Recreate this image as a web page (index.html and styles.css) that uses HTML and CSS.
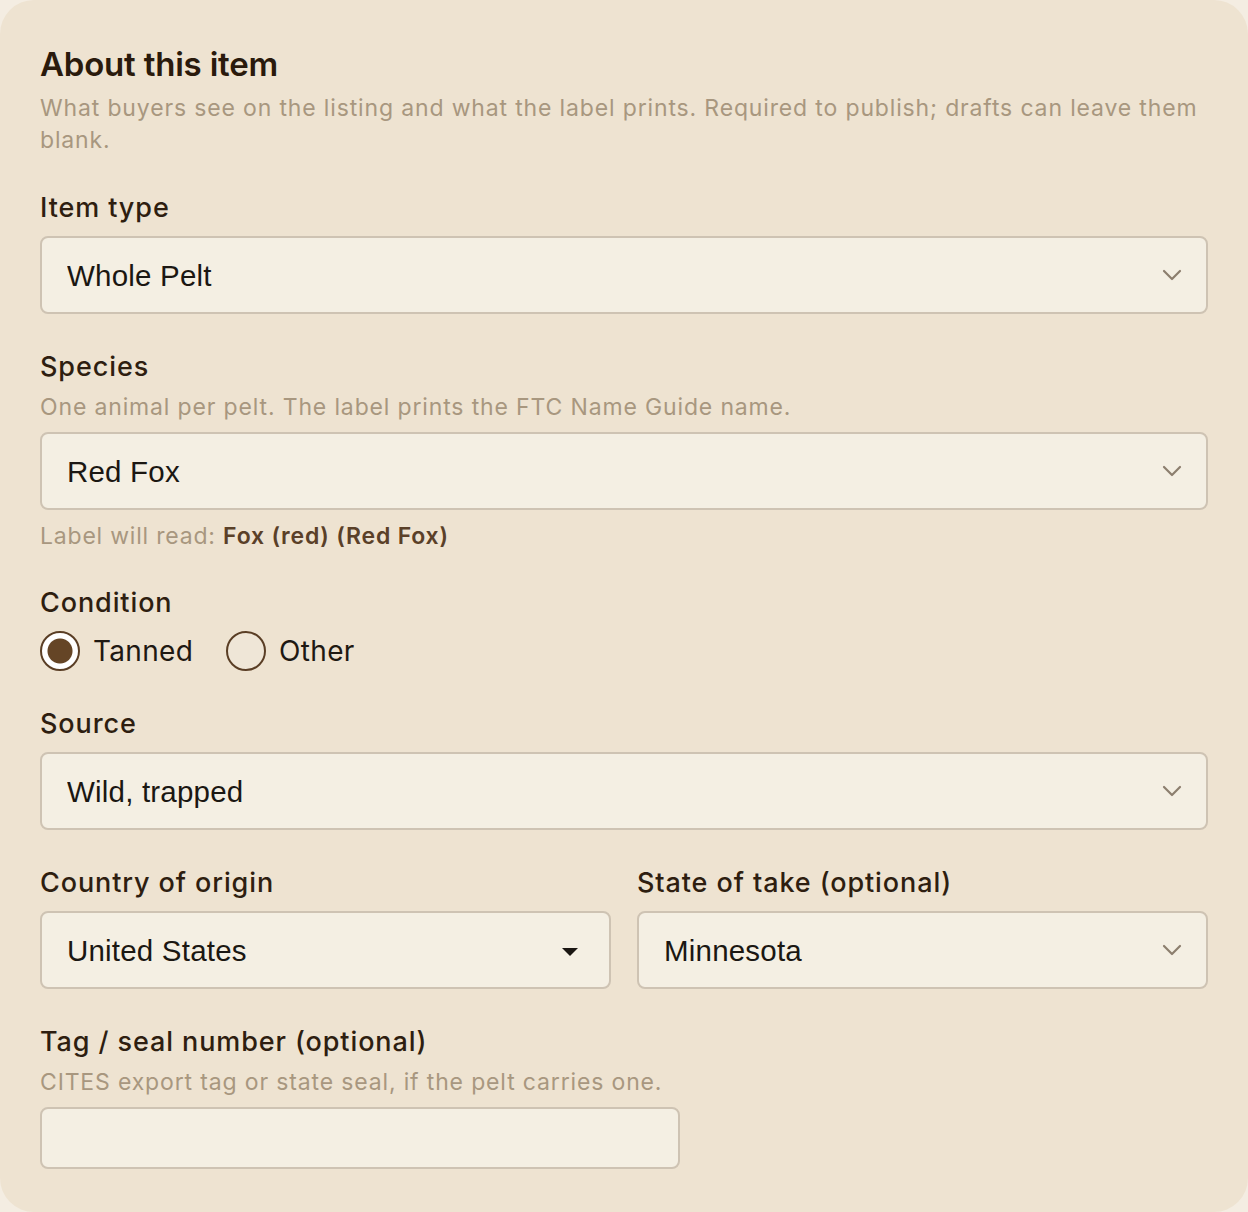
FILE: index.html
```html
<!DOCTYPE html>
<html lang="en">
<head>
    <meta charset="UTF-8">
    <meta name="viewport" content="width=device-width, initial-scale=1.0">
    <title>About this item</title>
    <link rel="stylesheet" href="styles.css">
</head>
<body>
    <form class="card">
        <h2 class="section-title">About this item</h2>
        <p class="section-desc">What buyers see on the listing and what the label prints. Required to publish; drafts can leave them blank.</p>

        <div class="field">
            <label class="field-label" for="itemType">Item type</label>
            <div class="select-wrap">
                <select id="itemType" class="control">
                    <option>Whole Pelt</option>
                </select>
                <svg class="chevron" width="20" height="12" viewBox="0 0 20 12"><path d="M2 2 L10 10 L18 2" fill="none" stroke="#8c7e6e" stroke-width="2.2" stroke-linecap="round" stroke-linejoin="round"/></svg>
            </div>
        </div>

        <div class="field">
            <label class="field-label" for="species">Species</label>
            <div class="field-hint">One animal per pelt. The label prints the FTC Name Guide name.</div>
            <div class="select-wrap">
                <select id="species" class="control">
                    <option>Red Fox</option>
                </select>
                <svg class="chevron" width="20" height="12" viewBox="0 0 20 12"><path d="M2 2 L10 10 L18 2" fill="none" stroke="#8c7e6e" stroke-width="2.2" stroke-linecap="round" stroke-linejoin="round"/></svg>
            </div>
            <div class="label-preview">Label will read: <strong>Fox (red) (Red Fox)</strong></div>
        </div>

        <div class="field">
            <div class="field-label">Condition</div>
            <div class="radio-row">
                <label class="radio"><input type="radio" name="condition" checked> Tanned</label>
                <label class="radio"><input type="radio" name="condition"> Other</label>
            </div>
        </div>

        <div class="field">
            <label class="field-label" for="source">Source</label>
            <div class="select-wrap">
                <select id="source" class="control">
                    <option>Wild, trapped</option>
                </select>
                <svg class="chevron" width="20" height="12" viewBox="0 0 20 12"><path d="M2 2 L10 10 L18 2" fill="none" stroke="#8c7e6e" stroke-width="2.2" stroke-linecap="round" stroke-linejoin="round"/></svg>
            </div>
        </div>

        <div class="field two-col">
            <div>
                <label class="field-label" for="country">Country of origin</label>
                <div class="select-wrap">
                    <select id="country" class="control">
                        <option>United States</option>
                    </select>
                    <svg class="caret" width="16" height="8" viewBox="0 0 16 8"><path d="M0 0 L16 0 L8 8 Z" fill="#1a1612"/></svg>
                </div>
            </div>
            <div>
                <label class="field-label" for="state">State of take (optional)</label>
                <div class="select-wrap">
                    <select id="state" class="control">
                        <option>Minnesota</option>
                    </select>
                    <svg class="chevron" width="20" height="12" viewBox="0 0 20 12"><path d="M2 2 L10 10 L18 2" fill="none" stroke="#8c7e6e" stroke-width="2.2" stroke-linecap="round" stroke-linejoin="round"/></svg>
                </div>
            </div>
        </div>

        <div class="field">
            <label class="field-label" for="tag">Tag / seal number (optional)</label>
            <div class="field-hint">CITES export tag or state seal, if the pelt carries one.</div>
            <input id="tag" type="text" class="control text-input">
        </div>
    </form>
</body>
</html>
```

FILE: styles.css
```css
* {
    margin: 0;
    padding: 0;
    box-sizing: border-box;
}

body {
    background: #f4ede2;
    font-family: Inter, "Noto Sans", sans-serif;
    color: #2c1d10;
}

.card {
    display: flex;
    flex-direction: column;
    gap: 37px;
    width: 1248px;
    min-height: 1212px;
    background: #eee3d1;
    border-radius: 34px;
    padding: 44px 40px 41px;
}

.section-title {
    font-size: 33px;
    line-height: 40px;
    font-weight: 600;
    color: #2a1a0c;
    letter-spacing: -0.2px;
}

.section-desc {
    margin-top: -29px;
    margin-bottom: -1px;
    font-size: 23px;
    line-height: 32px;
    letter-spacing: 0.85px;
    color: #a8977f;
}

.field-label {
    display: block;
    font-size: 27px;
    line-height: 32px;
    font-weight: 500;
    color: #2e1e10;
    letter-spacing: 0.9px;
    margin-bottom: 12px;
}

.field-hint {
    margin-top: -2px;
    margin-bottom: 11px;
    font-size: 23px;
    line-height: 28px;
    letter-spacing: 0.85px;
    color: #a8977f;
}

.select-wrap {
    position: relative;
}

.control {
    display: block;
    width: 100%;
    height: 78px;
    appearance: none;
    background: #f4efe3;
    border: 2px solid #cec3b3;
    border-radius: 8px;
    padding: 0 60px 0 25px;
    font-family: "Liberation Sans", Arial, sans-serif;
    font-size: 29.5px;
    letter-spacing: 0.2px;
    color: #1b1712;
    outline: none;
}

.text-input {
    width: 640px;
    height: 62px;
}

.chevron {
    position: absolute;
    right: 26px;
    top: 33px;
    pointer-events: none;
}

.caret {
    position: absolute;
    right: 33px;
    top: 37px;
    pointer-events: none;
}

.label-preview {
    margin-top: 12px;
    font-size: 23px;
    line-height: 28px;
    letter-spacing: 0.8px;
    color: #a8977f;
}

.label-preview strong {
    font-weight: 600;
    color: #5a4028;
}

.radio-row {
    display: flex;
    gap: 33px;
    height: 40px;
    margin-top: 1px;
    align-items: center;
}

.radio {
    display: flex;
    align-items: center;
    gap: 13px;
    font-size: 28px;
    color: #1f1912;
    letter-spacing: 0.3px;
}

.radio input {
    appearance: none;
    width: 40px;
    height: 40px;
    border-radius: 50%;
    border: 2px solid #5a3e25;
    background: #efe6d7;
    margin: 0;
}

.radio input:checked {
    background: radial-gradient(circle, #654526 0 12px, #ffffff 13px);
}

.two-col {
    display: grid;
    grid-template-columns: 1fr 1fr;
    gap: 26px;
}
```
